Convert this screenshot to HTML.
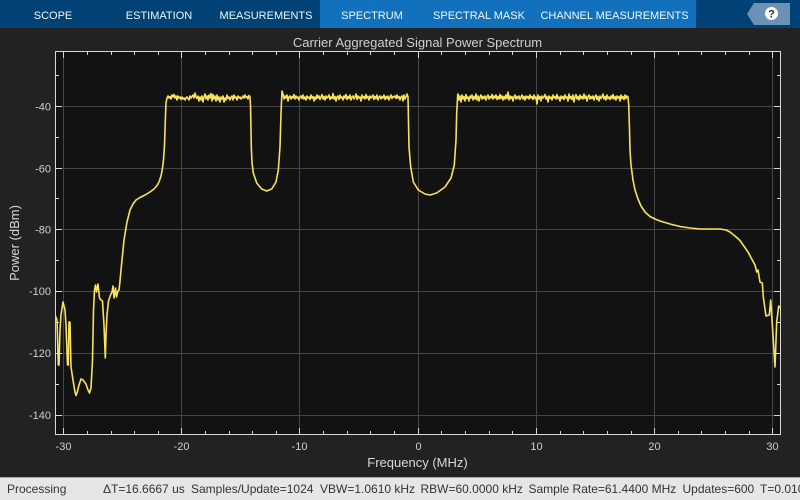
<!DOCTYPE html>
<html>
<head>
<meta charset="utf-8">
<style>
html,body{margin:0;padding:0;width:800px;height:500px;overflow:hidden;background:#222}
svg{position:absolute;left:0;top:0;display:block}
text{font-family:"Liberation Sans",sans-serif}
</style>
</head>
<body>
<svg width="800" height="500" viewBox="0 0 800 500" xmlns="http://www.w3.org/2000/svg">
<rect x="0" y="0" width="800" height="500" fill="#222222"/>
<!-- toolstrip -->
<rect x="0" y="0" width="800" height="28" fill="#004276"/>
<rect x="320" y="0" width="376" height="28" fill="#1271bd"/>
<g font-size="11" fill="#f2f6fa" text-anchor="middle">
<text x="53" y="19">SCOPE</text>
<text x="159" y="19">ESTIMATION</text>
<text x="266" y="19">MEASUREMENTS</text>
<text x="372" y="19">SPECTRUM</text>
<text x="479" y="19">SPECTRAL MASK</text>
<text x="614.5" y="19">CHANNEL MEASUREMENTS</text>
</g>
<path d="M747 14 L754 3 H790 V25 H754 Z" fill="#6a92b4"/>
<circle cx="771.500" cy="13.500" r="6.500" fill="#ffffff"/>
<text x="771.500" y="17.500" font-size="11" font-weight="bold" fill="#2a2a2a" text-anchor="middle">?</text>
<!-- title -->
<text x="417.500" y="47" font-size="13" fill="#cfcfcf" text-anchor="middle">Carrier Aggregated Signal Power Spectrum</text>
<!-- plot -->
<rect x="55.500" y="51.500" width="725" height="383" fill="#121212"/>
<g stroke="#474747" stroke-width="1" fill="none">
<path d="M63.500 52V434M181.500 52V434M299.500 52V434M418.500 52V434M536.500 52V434M654.500 52V434M772.500 52V434"/>
<path d="M56 106.500H780M56 168.500H780M56 229.500H780M56 291.500H780M56 353.500H780M56 415.500H780"/>
</g>
<g stroke="#d8d8d8" stroke-width="1" fill="none">
<rect x="55.500" y="51.500" width="725" height="383"/>
<path d="M63.500 52v6M181.500 52v6M299.500 52v6M418.500 52v6M536.500 52v6M654.500 52v6M772.500 52v6M63.500 434v-6M181.500 434v-6M299.500 434v-6M418.500 434v-6M536.500 434v-6M654.500 434v-6M772.500 434v-6"/>
<path d="M87.500 52v3M111.500 52v3M134.500 52v3M158.500 52v3M205.500 52v3M229.500 52v3M252.500 52v3M276.500 52v3M323.500 52v3M347.500 52v3M370.500 52v3M394.500 52v3M441.500 52v3M465.500 52v3M489.500 52v3M512.500 52v3M560.500 52v3M583.500 52v3M607.500 52v3M631.500 52v3M678.500 52v3M701.500 52v3M725.500 52v3M749.500 52v3"/>
<path d="M87.500 434v-3M111.500 434v-3M134.500 434v-3M158.500 434v-3M205.500 434v-3M229.500 434v-3M252.500 434v-3M276.500 434v-3M323.500 434v-3M347.500 434v-3M370.500 434v-3M394.500 434v-3M441.500 434v-3M465.500 434v-3M489.500 434v-3M512.500 434v-3M560.500 434v-3M583.500 434v-3M607.500 434v-3M631.500 434v-3M678.500 434v-3M701.500 434v-3M725.500 434v-3M749.500 434v-3"/>
<path d="M56 106.500h6M56 168.500h6M56 229.500h6M56 291.500h6M56 353.500h6M56 415.500h6M780 106.500h-6M780 168.500h-6M780 229.500h-6M780 291.500h-6M780 353.500h-6M780 415.500h-6"/>
<path d="M56 75.500h3M56 137.500h3M56 198.500h3M56 260.500h3M56 322.500h3M56 384.500h3M780 75.500h-3M780 137.500h-3M780 198.500h-3M780 260.500h-3M780 322.500h-3M780 384.500h-3"/>
</g>
<!-- trace -->
<path fill="none" stroke="#f8e25a" stroke-width="1.600" stroke-linejoin="round" d="M55.500 316L57 320L58.300 365L59 365L60 330L61 315L63 302L65 310L66 325L67.500 365L68.300 365L69 322L70 322L71 367L73 380L75 392L76 395.500L77 393L79 385L81 379L83 380L86 384L88 390L89.500 393L91 388L92.500 360L93.500 310L94.500 290L95.500 285L96.500 292L98 284L99.500 298L101 300L102.500 301L104 325L105.300 358L106 335L107 315L108.500 301L110.500 295L112 292L113 286L114 298L115.500 288L116.500 297L118 291L119 290L120 281L121 270L124 240L127 222L130 210L133 204L136 200L140 197.500L145 195L150 192L154 189L157 185.500L159 182L161 176L162.500 168L163.500 160L164.500 145L165 130L165.500 115L166 103L167 98
L168 96L169 98L170 96.500L171 99L172 95L173 97L174 94.500L175 98L176 96L177 100L178 96L179 98L180 97L181 99.500L182 97L183 99L184 98L185 100L186 98L187 97L188 98.500L189 100L190 96L191 98L192 96.500L193 95L194 98L195 93L196 97L197 98.500L198 96L199 101L200 97L201 100L202 96L203 102L204 97L205 94L206 99L207 96L208 100L209 95L210 98L211 93.500L212 101L213 94.500L214 99L215 96L216 101L217 95L218 100L219 97L220 102L221 97L222 99L223 96L224 102L225 98L226 100L227 95L228 98.500L229 97L230 100L231 97.500L232 96L233 100L234 95L235 98L236 97L237 100L238 96L239 98L240 97L241 99L242 98L243 96L244 98L245 95L246 97.500L247 96.500L248 99L249 95.500L250 97
L250.500 105L251.300 147L252 163L253.300 173L256.700 183L261.700 189L266.700 191L271.700 189L276 182L278.300 170L280 147L281 113L282 91
L283 94L284 99L285 96L286 98L287 95L288 101L289 97L290 96L291 99L292 96.500L293 98L294 94.500L295 99L296 96L297 98L298 97L299 100L300 97L301 96L302 98.500L303 95L304 99L305 97L306 100L307 96L308 98L309 97L310 99.500L311 95L312 98L313 96.500L314 101L315 97L316 99L317 95L318 98L319 96L320 99.500L321 97L322 94.500L323 99L324 96.500L325 100L326 96L327 98L328 97L329 95L330 99.500L331 97L332 98.500L333 93.500L334 99L335 96.500L336 101L337 97L338 96L339 99.500L340 95L341 98L342 97L343 100L344 96L345 98L346 94.500L347 99.500L348 96.500L349 98.500L350 95L351 100L352 97L353 96L354 99L355 97L356 94L357 99.500L358 96L359 98L360 97L361 101L362 95L363 98L364 96.500L365 99L366 94.500L367 98L368 96.500L369 100L370 96L371 98L372 97L373 95L374 99.500L375 96.500L376 98.500L377 95L378 100L379 97L380 96L381 99L382 96.500L383 98L384 95L385 99.500L386 96.500L387 98.500L388 96L389 100L390 97L391 95L392 98.500L393 96.500L394 97L395 96L396 98.500L397 95L398 98L399 96.500L400 100L401 97L402 96L403 101L404 95L405 99L406 97L407 94L408 97
L409 147L410.700 167L413.300 182L418.300 190L425 194L430 195L436.700 193L445 187L451 178L454.300 165L456 140L456.700 113L457.700 95
L458 94L459 100L460 96L461 102L462 95L463 99L464 96.500L465 101L466 94.500L467 98.500L468 97L469 101L470 96L471 98L472 95L473 100L474 96.500L475 99L476 94L477 100L478 96L479 101L480 97L481 95L482 99L483 96.500L484 98.500L485 96L486 100L487 97L488 95L489 99L490 96.500L491 98L492 94.500L493 99L494 96L495 98L496 95L497 99.500L498 96.500L499 99L500 94.500L501 98.500L502 96L503 100L504 96.500L505 99L506 95L507 98.500L508 92L509 100L510 96L511 98.500L512 96.500L513 101L514 97L515 95L516 99L517 96.500L518 98.500L519 96L520 99.500L521 97L522 95L523 99L524 96.500L525 100L526 96L527 98L528 96.500L529 99L530 95L531 98L532 96.500L533 99.500L534 95L535 98.500L536 97L537 104L538 95L539 99L540 96.500L541 101L542 96L543 98L544 97L545 94.500L546 99L547 96.500L548 102L549 96L550 98.500L551 97L552 100L553 95L554 98L555 96.500L556 99L557 94.500L558 98.500L559 97L560 101L561 96L562 98.500L563 96.500L564 99.500L565 95L566 98L567 97L568 101L569 94L570 98.500L571 96.500L572 99.500L573 95L574 102L575 97L576 94.500L577 99L578 96.500L579 100L580 95L581 98.500L582 96.500L583 99L584 94L585 98.500L586 96L587 101L588 97L589 95L590 99L591 96.500L592 98.500L593 96L594 100L595 97L596 95L597 99.500L598 96.500L599 101L600 96L601 98.500L602 97L603 94L604 99L605 96.500L606 100L607 95L608 98.500L609 97L610 99.500L611 96L612 98.500L613 94.500L614 99L615 96.500L616 100L617 96L618 98L619 96.500L620 101L621 95L622 98.500L623 96.500L624 99.500L625 95L626 98.500L627 96L628 97
L628.700 105L629.500 130L630 150L631 165L633 180L635 190L638 199L641 206L645 212L650 216.500L655 219L660 221L670 224L680 226.500L690 228L700 229L720 229L726 230L730 232L735 236L740 240.500L748 252L755 265L756.700 272L758 270L760 282L762.300 283L763.300 297L766 316L769.300 315L770.700 300L772 320L775 367L776.700 322L778.700 306L780 308"/>
<!-- axis labels -->
<g font-size="11" fill="#cfcfcf" text-anchor="middle">
<text x="63.500" y="450">-30</text>
<text x="181.500" y="450">-20</text>
<text x="299.500" y="450">-10</text>
<text x="418.500" y="450">0</text>
<text x="536.500" y="450">10</text>
<text x="654.500" y="450">20</text>
<text x="772.500" y="450">30</text>
</g>
<g font-size="11" fill="#cfcfcf" text-anchor="end">
<text x="51" y="110.500">-40</text>
<text x="51" y="172.500">-60</text>
<text x="51" y="233.500">-80</text>
<text x="51" y="295">-100</text>
<text x="51" y="357">-120</text>
<text x="51" y="419">-140</text>
</g>
<text x="417.500" y="467" font-size="13" fill="#d8d8d8" text-anchor="middle">Frequency (MHz)</text>
<text x="19" y="243" font-size="13" fill="#d8d8d8" text-anchor="middle" transform="rotate(-90 19 243)">Power (dBm)</text>
<!-- status bar -->
<rect x="0" y="477" width="800" height="23" fill="#e6e6e6"/>
<rect x="0" y="477" width="800" height="1" fill="#a8a8a8"/>
<g font-size="12" fill="#333333">
<text x="7" y="493">Processing</text>
<text x="103" y="493">ΔT=16.6667 us</text>
<text x="191" y="493">Samples/Update=1024</text>
<text x="320" y="493">VBW=1.0610 kHz</text>
<text x="420.500" y="493">RBW=60.0000 kHz</text>
<text x="528.500" y="493">Sample Rate=61.4400 MHz</text>
<text x="682.500" y="493">Updates=600</text>
<text x="760" y="493">T=0.010</text>
</g>
</svg>
</body>
</html>
